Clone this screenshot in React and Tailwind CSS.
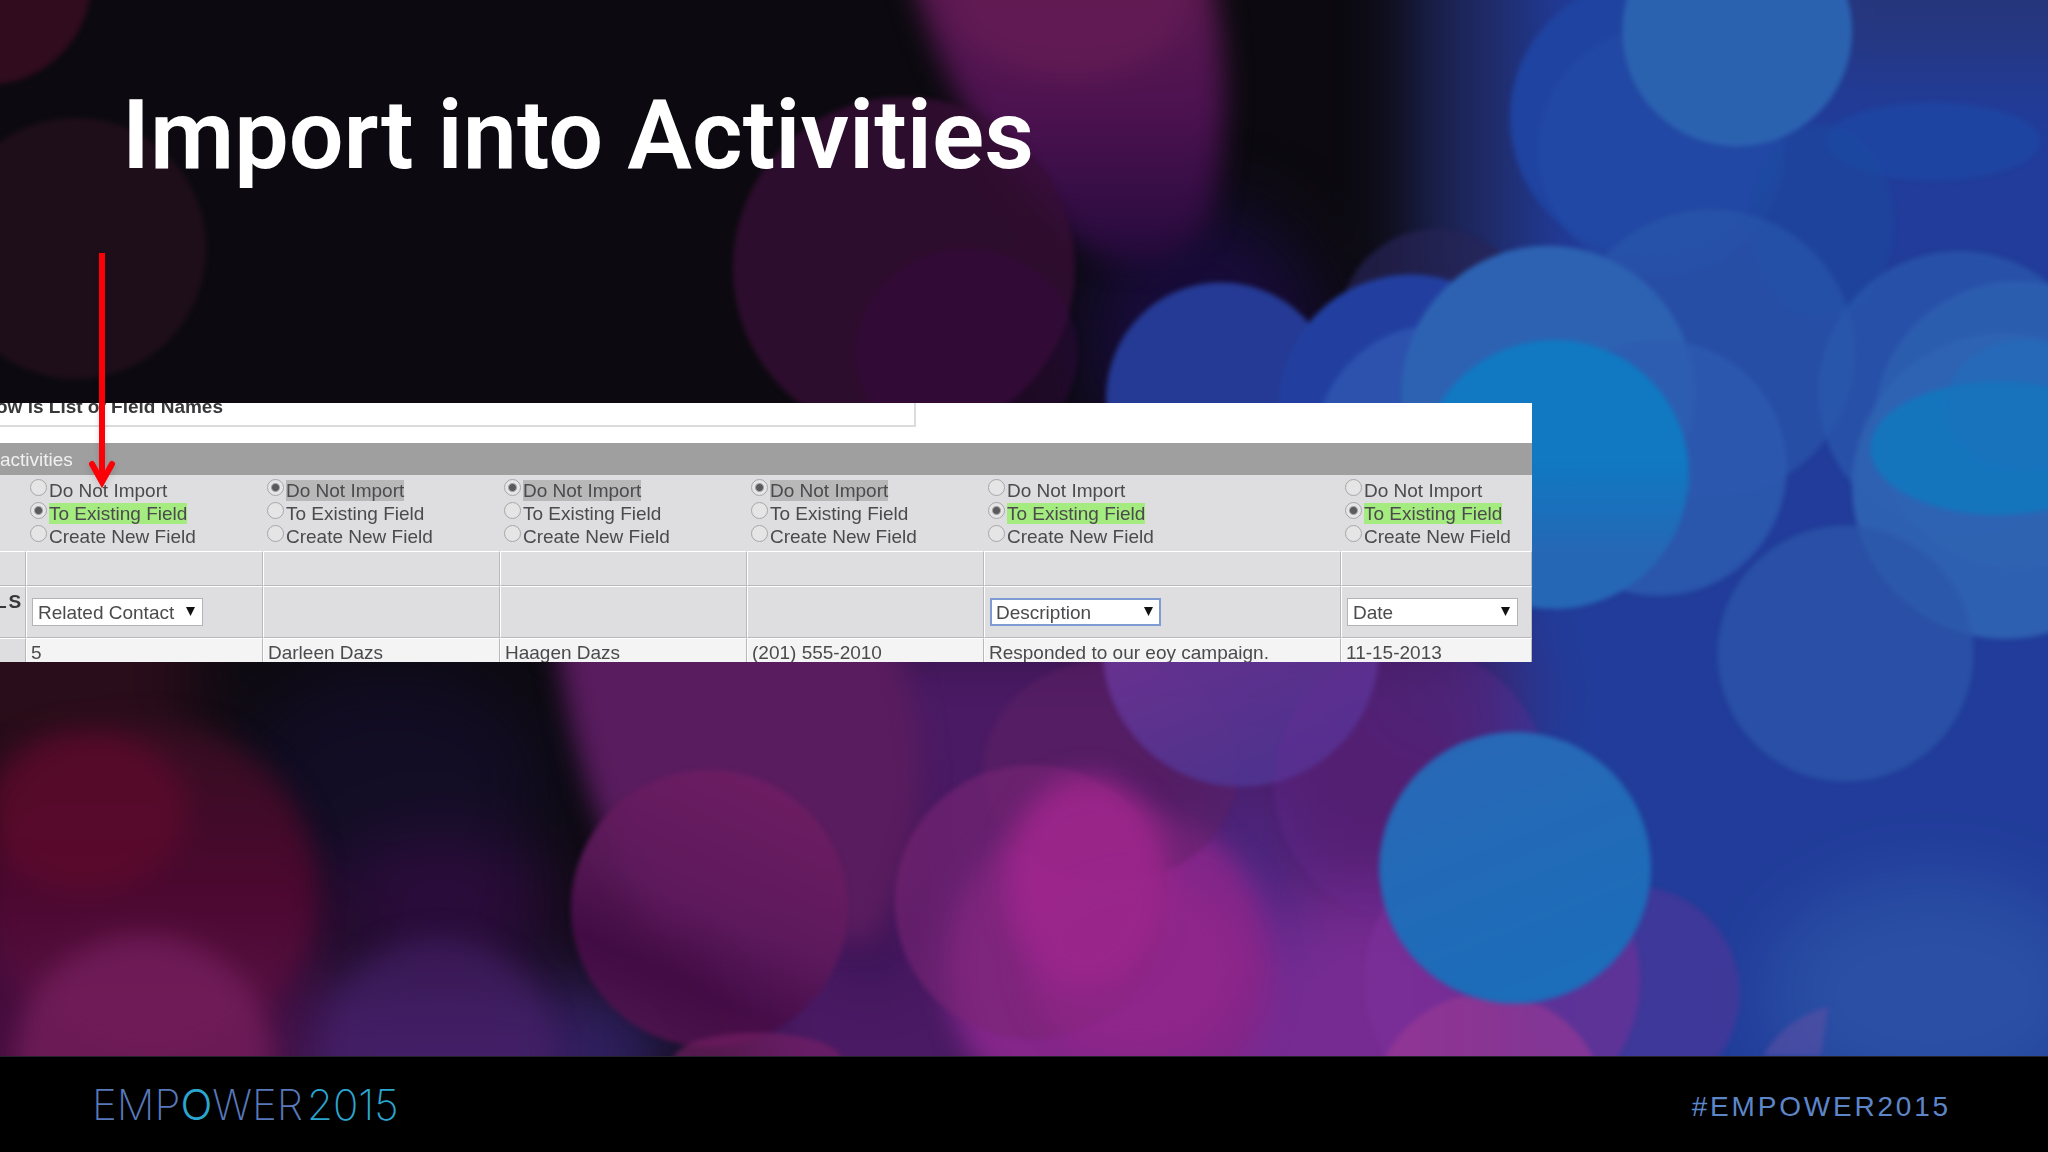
import { useState } from "react";

// =========================
// DATA
// =========================
const options = ["Do Not Import", "To Existing Field", "Create New Field"];

const columns = [
  { id: "contact", choice: 1, field: "Related Contact", value: "5" },
  { id: "first", choice: 0, field: null, value: "Darleen Dazs" },
  { id: "last", choice: 0, field: null, value: "Haagen Dazs" },
  { id: "phone", choice: 0, field: null, value: "(201) 555-2010" },
  {
    id: "description",
    choice: 1,
    field: "Description",
    value: "Responded to our eoy campaign.",
    focused: true,
  },
  { id: "date", choice: 1, field: "Date", value: "11-15-2013" },
];

// =========================
// BOKEH BACKGROUND
// =========================
const Bokeh = () => (
  <svg
    className="absolute inset-0 h-full w-full"
    viewBox="0 0 1568 808"
    preserveAspectRatio="none"
    aria-hidden="true"
  >
    <defs>
      <filter id="haze" x="-50%" y="-50%" width="200%" height="200%" colorInterpolationFilters="sRGB">
        <feGaussianBlur stdDeviation="28" />
      </filter>
      <filter id="soft" x="-30%" y="-30%" width="160%" height="160%" colorInterpolationFilters="sRGB">
        <feGaussianBlur stdDeviation="10" />
      </filter>
      <filter id="edge" x="-10%" y="-10%" width="120%" height="120%" colorInterpolationFilters="sRGB">
        <feGaussianBlur stdDeviation="2" />
      </filter>
      <linearGradient id="plum" x1="0" y1="0" x2="0" y2="1">
        <stop offset="0" stopColor="#5e1a50" />
        <stop offset="0.5" stopColor="#4c1250" />
        <stop offset="1" stopColor="#240a3c" />
      </linearGradient>
      <linearGradient id="rose" x1="0.7" y1="0" x2="0.25" y2="1">
        <stop offset="0" stopColor="#701e64" />
        <stop offset="0.5" stopColor="#5e1a5c" />
        <stop offset="0.75" stopColor="#470c48" />
        <stop offset="1" stopColor="#541650" />
      </linearGradient>
      <linearGradient id="wine" x1="0" y1="0" x2="0" y2="1">
        <stop offset="0" stopColor="#340e20" />
        <stop offset="0.5" stopColor="#4c0830" />
        <stop offset="1" stopColor="#5a144a" />
      </linearGradient>
      <linearGradient id="violet" x1="0" y1="0" x2="0.4" y2="1">
        <stop offset="0.4" stopColor="#70379a" />
        <stop offset="1" stopColor="#503694" />
      </linearGradient>
      <linearGradient id="lake" x1="0" y1="0" x2="0.4" y2="1">
        <stop offset="0" stopColor="#2a68b6" />
        <stop offset="1" stopColor="#1c6dba" />
      </linearGradient>
      <linearGradient id="cyan" x1="0" y1="0" x2="0" y2="1">
        <stop offset="0" stopColor="#1079c2" />
        <stop offset="0.45" stopColor="#1079c2" />
        <stop offset="0.8" stopColor="#2667b5" />
      </linearGradient>
    </defs>

    <rect width="1568" height="808" fill="#0c0a10" />

    {/* wide colour fields */}
    <g filter="url(#haze)">
      <rect x="1130" y="-80" width="560" height="1000" fill="#213c9a" />
      <rect x="1085" y="-80" width="80" height="330" fill="#1f2860" />
      <rect x="1380" y="-60" width="260" height="110" fill="#26367c" />
      <ellipse cx="920" cy="260" rx="90" ry="100" fill="#180c3a" />
      <rect x="-80" y="450" width="230" height="150" fill="#2a0d1a" />
      <ellipse cx="300" cy="600" rx="120" ry="90" fill="#120d24" />
      <path d="M470 480H1150V880H600L500 640Z" fill="#4a1a64" />
      <rect x="-80" y="680" width="320" height="240" fill="#440c3c" />
      <ellipse cx="340" cy="690" rx="90" ry="50" fill="#2c0c3c" />
      <rect x="230" y="750" width="240" height="120" fill="#3c1c60" />
      <rect x="430" y="760" width="80" height="100" fill="#2e2060" />
      <rect x="640" y="600" width="50" height="150" fill="#35104e" />
      <rect x="900" y="680" width="230" height="240" fill="#762b92" />
      <rect x="930" y="600" width="50" height="130" fill="#4c2a88" />
      <ellipse cx="1110" cy="530" rx="60" ry="36" fill="#40226c" />
      <ellipse cx="1480" cy="760" rx="130" ry="90" fill="#2a4fa4" />
    </g>

    {/* plum lights, top */}
    <g filter="url(#soft)">
      <path d="M695 -30H925Q950 80 925 170Q890 220 830 190Q730 110 695 -30Z" fill="url(#plum)" />
      <ellipse cx="820" cy="0" rx="90" ry="60" fill="#641c54" opacity="0.8" />
    </g>
    <g filter="url(#edge)">
      <circle cx="-10" cy="-15" r="80" fill="#300c1e" />
      <circle cx="58" cy="190" r="100" fill="#1e0e1a" />
      <circle cx="692" cy="205" r="131" fill="#360e34" opacity="0.8" />
      <ellipse cx="740" cy="270" rx="85" ry="80" fill="#3a0b44" opacity="0.4" />
    </g>

    {/* wine lights, lower left */}
    <g filter="url(#soft)">
      <circle cx="115" cy="680" r="128" fill="url(#wine)" />
      <ellipse cx="65" cy="620" rx="78" ry="62" fill="#5c0a2c" opacity="0.8" />
      <circle cx="110" cy="815" r="100" fill="#741e5c" opacity="0.8" />
      <circle cx="335" cy="805" r="88" fill="#4a226e" opacity="0.5" />
      <path d="M425 480H680Q735 610 670 720L500 715Q440 610 425 480Z" fill="#591c5e" />
      <circle cx="850" cy="740" r="125" fill="#84268a" />
    </g>
    <g filter="url(#edge)">
      <circle cx="543" cy="695" r="106" fill="url(#rose)" opacity="0.9" />
      <ellipse cx="850" cy="590" rx="98" ry="85" fill="#5e1f64" opacity="0.5" />
      <circle cx="790" cy="690" r="105" fill="#7a2474" opacity="0.6" />
      <ellipse cx="580" cy="812" rx="65" ry="22" fill="#7c2068" opacity="0.6" />
      <circle cx="950" cy="496" r="106" fill="url(#violet)" opacity="0.85" />
      <circle cx="1080" cy="600" r="105" fill="#6a2c96" opacity="0.3" />
      <circle cx="1150" cy="750" r="106" fill="#7b2f98" opacity="0.7" />
      <circle cx="1250" cy="760" r="82" fill="#5a3498" opacity="0.5" />
      <circle cx="1140" cy="850" r="90" fill="#9c3a94" opacity="0.6" />
    </g>

    {/* magenta core */}
    <g filter="url(#soft)">
      <ellipse cx="832" cy="675" rx="62" ry="82" fill="#a2268e" opacity="0.8" />
      <ellipse cx="870" cy="740" rx="85" ry="70" fill="#98268c" opacity="0.5" />
    </g>

    {/* blue lights */}
    <g filter="url(#edge)">
      <circle cx="1100" cy="250" r="75" fill="#262456" opacity="0.7" />
      <circle cx="935" cy="304" r="88" fill="#253a94" />
      <circle cx="1080" cy="311" r="101" fill="#223fa0" />
      <circle cx="1262" cy="90" r="106" fill="#1f43a0" />
      <circle cx="1272" cy="115" r="95" fill="#2450a8" opacity="0.45" />
      <ellipse cx="1480" cy="108" rx="82" ry="30" fill="#1c4aa6" opacity="0.6" />
      <ellipse cx="1395" cy="170" rx="55" ry="75" fill="#1c4aa0" opacity="0.5" />
      <circle cx="1310" cy="270" r="110" fill="#2c5aae" opacity="0.6" />
      <circle cx="1103" cy="345" r="97" fill="#2c52ae" />
      <circle cx="1185" cy="300" r="112" fill="#2d62b2" />
      <circle cx="1270" cy="358" r="98" fill="#2d5cb0" opacity="0.8" />
      <circle cx="1190" cy="363" r="103" fill="url(#cyan)" />
      <circle cx="1500" cy="300" r="108" fill="#2b5aae" opacity="0.7" />
      <circle cx="1535" cy="372" r="117" fill="#2f62b2" opacity="0.95" />
      <circle cx="1545" cy="325" r="110" fill="#2e66b4" opacity="0.6" />
      <ellipse cx="1530" cy="343" rx="98" ry="51" fill="#1475bd" />
      <ellipse cx="1550" cy="310" rx="60" ry="50" fill="#1c70bb" opacity="0.5" />
      <circle cx="1413" cy="500" r="98" fill="#2c57aa" opacity="0.75" />
      <path d="M1350 808Q1365 780 1400 770L1394 808Z" fill="#544ea4" opacity="0.7" />
      <circle cx="1330" cy="24" r="88" fill="#2b62b0" />
      <circle cx="1160" cy="664" r="104" fill="url(#lake)" />
    </g>
  </svg>
);

// =========================
// RADIO GROUP OF A COLUMN
// =========================
const ImportChoice = ({ column }) => {
  const [choice, setChoice] = useState(column.choice);

  const textStyle = (index) => {
    if (index !== choice || index === 2) return "leading-[21px]";

    return index === 0
      ? "leading-[21px] bg-[#b9b8b9]"
      : "leading-[21px] bg-[#a4ec80]";
  };

  return (
    <div className="flex flex-col">
      {options.map((option, index) => (
        <label key={option} className="flex h-[23px] items-center gap-0.5">
          <input
            type="radio"
            name={column.id}
            checked={choice === index}
            onChange={() => setChoice(index)}
            className="
              size-[17px]
              shrink-0
              self-start
              appearance-none
              rounded-full
              border
              border-[#a6a6a8]
              bg-[#e6e5e6]
              checked:bg-[radial-gradient(circle,#5a595b_3px,#e6e5e6_5px)]
            "
          />
          <span className={textStyle(index)}>{option}</span>
        </label>
      ))}
    </div>
  );
};

// =========================
// FIELD DROP-DOWN
// =========================
const FieldSelect = ({ column }) => (
  <div className="relative ml-px w-[171px]">
    <select
      aria-label={`Field for ${column.value}`}
      defaultValue={column.field}
      className={
        column.focused
          ? "block h-7 w-full appearance-none border-2 border-[#7f9bd3] bg-white pl-1 text-[#4b4a4c]"
          : "block h-7 w-full appearance-none border border-[#b4b3b5] bg-white pl-[5px] text-[#4b4a4c]"
      }
    >
      <option>{column.field}</option>
    </select>
    <svg
      className="pointer-events-none absolute top-[9px] right-2 h-[9px] w-[9px]"
      viewBox="0 0 9 9"
      aria-hidden="true"
    >
      <path d="M0 0H9L4.5 9Z" fill="#111" />
    </svg>
  </div>
);

// =========================
// IMPORT TABLE
// =========================
const line = "border-l border-t border-r border-b border-l-white border-t-white border-r-[#b9b8ba] border-b-[#b9b8ba]";

const ImportTable = () => (
  <div className="mr-[516px] h-[259px] overflow-hidden bg-white text-[19px] leading-[21px] text-[#4b4a4c]">
    <div className="mb-4 flex h-6 w-[916px] items-start border-r-2 border-b-2 border-[#dcdcdc]">
      <p className="-mt-2 -ml-1 leading-6 font-bold text-[#38373a]">
        ow is List of Field Names
      </p>
    </div>

    <table className="w-full table-fixed border-separate border-spacing-0 bg-[#dedddf]">
      <colgroup>
        <col className="w-[26px]" />
        <col className="w-[237px]" />
        <col className="w-[237px]" />
        <col className="w-[247px]" />
        <col className="w-[237px]" />
        <col className="w-[357px]" />
        <col />
      </colgroup>

      <thead>
        <tr className="h-8 bg-[#a09f9f]">
          <th colSpan="7" className="p-0 text-left font-normal text-[#f0f0f0]">
            activities
          </th>
        </tr>
      </thead>

      <tbody>
        <tr className="h-[76px]">
          <td />
          {columns.map((column) => (
            <td key={column.id} className="pt-1 pl-1 align-top">
              <ImportChoice column={column} />
            </td>
          ))}
        </tr>

        <tr className="h-[35px]">
          <td className={`${line} border-l-0`} />
          {columns.map((column) => (
            <td key={column.id} className={line} />
          ))}
        </tr>

        <tr className="h-[52px]">
          <td className={`${line} border-l-0 pt-1 pr-0.5 align-top`}>
            <div className="flex justify-end font-bold tracking-widest text-[#38373a]">
              LS
            </div>
          </td>
          {columns.map((column) => (
            <td key={column.id} className={`${line} pl-1`}>
              {column.field && <FieldSelect column={column} />}
            </td>
          ))}
        </tr>

        <tr className="h-8 bg-[#f5f4f5]">
          <td className={`${line} border-l-0 bg-[#dedddf]`} />
          {columns.map((column) => (
            <td key={column.id} className={`${line} pt-[3px] pl-1 align-top`}>
              {column.value}
            </td>
          ))}
        </tr>
      </tbody>
    </table>
  </div>
);

// =========================
// SLIDE
// =========================
const App = () => (
  <div className="flex min-h-screen flex-col overflow-hidden bg-black font-['Liberation_Sans',Arial,sans-serif]">
    <main className="relative flex-1">
      <Bokeh />

      <div className="relative flex flex-col gap-[218px] pt-[85px]">
        <h1 className="pl-[122px] font-[Roboto,sans-serif] text-[97px] leading-[100px] font-semibold text-white">
          Import into Activities
        </h1>

        <ImportTable />
      </div>

      {/* pointer to the first column */}
      <svg
        className="absolute top-[252px] left-[84px] h-[240px] w-9 drop-shadow-md"
        viewBox="0 0 36 240"
        fill="none"
        stroke="#fb0007"
        aria-hidden="true"
      >
        <path d="M18 1V226" strokeWidth="6" />
        <path d="M8 212L18 230L28 212" strokeWidth="6" strokeLinecap="round" />
      </svg>
    </main>

    <footer className="flex h-24 items-center justify-between border-t border-[#24222c] pr-[97px] pl-[92px]">
      <div className="flex items-center gap-1 font-[Inter,sans-serif] text-[42px] font-extralight text-[#5878bc]">
        <span>
          EMP<span className="font-light text-[#2ba6d0]">O</span>WER
        </span>
        <span className="text-[#2ba6d0]">2015</span>
      </div>

      <a href="#EMPOWER2015" className="pt-1 text-[28px] tracking-widest text-[#5d86c8]">
        #EMPOWER2015
      </a>
    </footer>
  </div>
);

export default App;
